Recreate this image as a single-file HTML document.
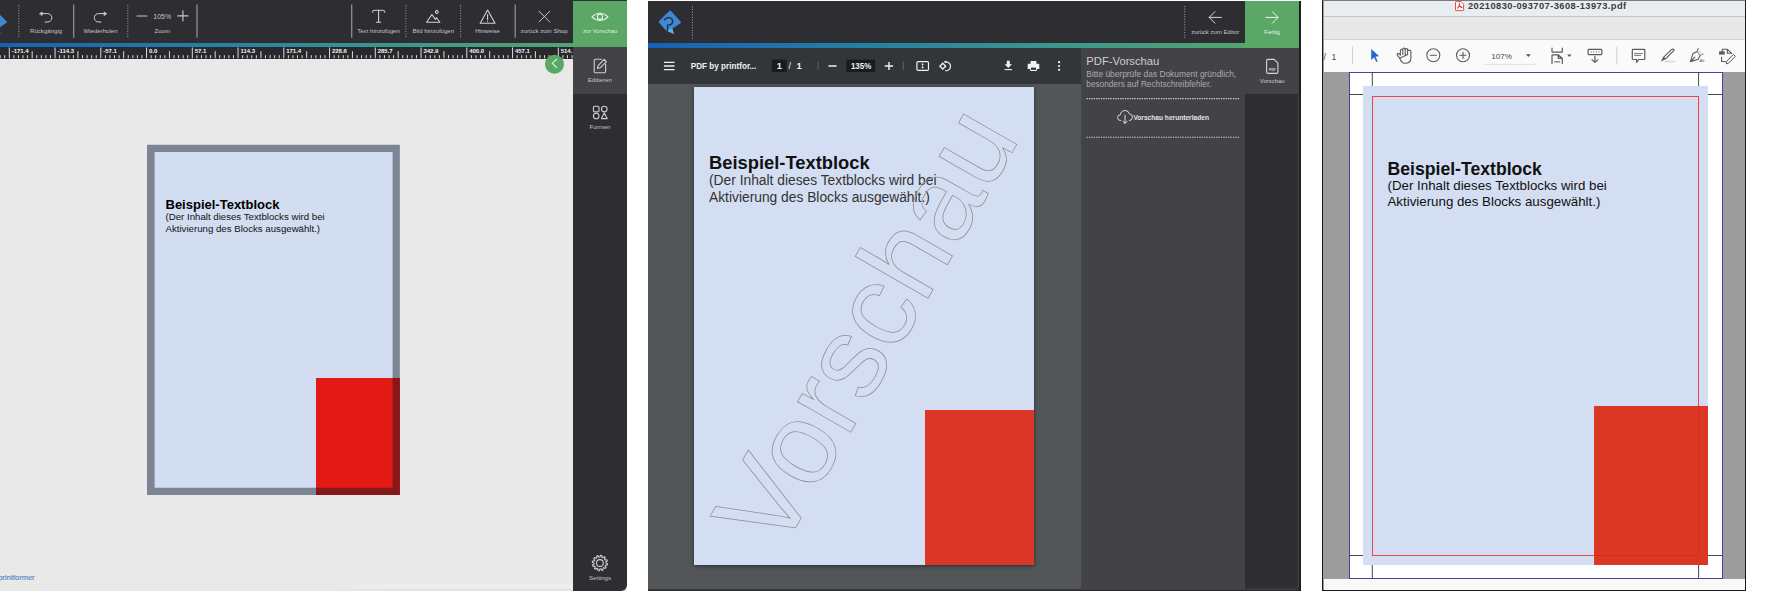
<!DOCTYPE html>
<html><head><meta charset="utf-8">
<style>
*{margin:0;padding:0;box-sizing:border-box}
html,body{width:1772px;height:591px;overflow:hidden;background:#fff;font-family:"Liberation Sans",sans-serif}
.a{position:absolute}
.lbl{position:absolute;color:#c9c9cc;font-size:5.6px;white-space:nowrap;text-align:center;transform:translateX(-50%)}
.sepd{position:absolute;width:0;border-left:1px dotted #9a9a9e}
.seps{position:absolute;width:1.3px;background:#8d8d91}
svg{position:absolute;overflow:visible}
</style></head><body>

<!-- ================= PANEL 1 ================= -->
<div class="a" style="left:0;top:0;width:627px;height:591px;background:#e9e9e9"></div>
<div class="a" style="left:0;top:0;width:627px;height:42.5px;background:#2e2d32"></div>
<div class="a" style="left:0;top:42.5px;width:627px;height:4.8px;background:linear-gradient(90deg,#1562b7 0%,#2480a4 33%,#3a978d 62%,#59a867 100%)"></div>
<div class="a" style="left:0;top:47.3px;width:573px;height:11.3px;background:#29292d"></div>
<!-- sidebar -->
<div class="a" style="left:573px;top:47.3px;width:54px;height:544px;background:#2e2d32;border-bottom-right-radius:6px"></div>
<div class="a" style="left:573px;top:47.3px;width:54px;height:46.5px;background:#434247"></div>
<div class="a" style="left:573px;top:1px;width:54px;height:46.3px;background:#5ba866"></div>


<!-- p1 toolbar svg -->
<svg class="a" style="left:0;top:0" width="627" height="591" viewBox="0 0 627 591">
<g clip-path="url(#c1)">
<clipPath id="c1"><rect x="0" y="0" width="573" height="591"/></clipPath>
<!-- logo -->
<path d="M-4.2,10.6 L7.4,22.3 L-1.5,28.2 L0.5,33.6 L-6,30.8 L-15.8,21.5 Z" fill="#3d89d4"/>
<path d="M0.5,33.6 L-1.5,28.2 L-5,30 Z" fill="#5bb0ea"/>
</g>
<!-- separators -->
<path d="M18.8,5V38M127.8,5V38M405.9,5V38M460.6,5V38" stroke="#a6a6aa" stroke-width="1" stroke-dasharray="1,1.6"/>
<path d="M73.7,4.6V37.8M197,4.6V37.8M351.7,4.6V37.8M515.2,4.6V37.8" stroke="#8e8e92" stroke-width="1.3"/>
<g fill="none" stroke="#d2d2d5" stroke-width="1.1" stroke-linecap="round" stroke-linejoin="round">
<!-- undo -->
<path d="M41.8,13.6 H47.6 A4.2,4.2 0 0 1 47.6,22 H45.2" stroke-width="1"/>
<path d="M39.6,13.6 L42.2,11.9 L42.2,15.3 Z" fill="#d2d2d5" stroke-width="0.6"/>
<!-- redo -->
<path d="M104.3,13.6 H98.5 A4.2,4.2 0 0 0 98.5,22 H100.9" stroke-width="1"/>
<path d="M106.6,13.6 L104,11.9 L104,15.3 Z" fill="#d2d2d5" stroke-width="0.6"/>
<!-- minus plus -->
<path d="M137,16H147" stroke-width="1.15" stroke="#c8c8cc"/>
<path d="M177.8,15.9H188M182.9,10.8V21" stroke-width="1.15" stroke="#c8c8cc"/>
<!-- T -->
<path d="M372.5,12.2 Q372.8,10.3 375,10.3 H382.3 Q384.6,10.3 384.8,12.2 M378.6,10.3 V21.8 M376.4,22.2 H380.8"/>
<!-- mountain -->
<path d="M426.6,22.3 L431.9,14.5 L435.4,19.4 L436.6,17.7 L439.8,22.3 Z"/>
<circle cx="436.8" cy="12" r="1.4"/>
<!-- warning -->
<path d="M487.6,10 L495,23.3 H480.2 Z"/>
<path d="M487.6,14.6V19.6M487.6,21.2V21.4"/>
<!-- X -->
<path d="M539,11.2 L549.8,22 M549.8,11.2 L539,22" stroke-width="0.9"/>
<!-- eye -->
<path d="M591.9,16.8 Q600,9.6 608,16.8 Q600,24 591.9,16.8 Z" stroke="#e6f2e6"/>
<circle cx="600" cy="16.8" r="2.6" stroke="#e6f2e6"/>
</g>
<g font-family="Liberation Sans" font-size="6.1" fill="#c4c4c8" text-anchor="middle">
<text x="46.1" y="33.2">Rückgängig</text>
<text x="100.5" y="33.2">Wiederholen</text>
<text x="162.2" y="33.2">Zoom</text>
<text x="378.5" y="33.2">Text hinzufügen</text>
<text x="433.3" y="33.2">Bild hinzufügen</text>
<text x="487.6" y="33.2">Hinweise</text>
<text x="544.1" y="33.2">zurück zum Shop</text>
<text x="600.1" y="33.2" fill="#dbeedd" font-size="5.9">zur Vorschau</text>
<text x="162.2" y="18.8" font-size="7.9" fill="#c4c4c8" textLength="17.9" lengthAdjust="spacingAndGlyphs">105%</text>
</g>
<!-- ruler -->
<g clip-path="url(#c2)" font-family="Liberation Sans" font-size="6" font-weight="bold" fill="#f4f4f4">
<clipPath id="c2"><rect x="0" y="47.3" width="573" height="11.3"/></clipPath>
<path d="M0.15,55.2V58.6M4.73,55.2V58.6M9.30,47.3V58.6M13.88,55.2V58.6M18.45,55.2V58.6M23.03,55.2V58.6M27.60,55.2V58.6M32.17,51.2V58.6M36.75,55.2V58.6M41.33,55.2V58.6M45.90,55.2V58.6M50.48,55.2V58.6M55.05,47.3V58.6M59.62,55.2V58.6M64.20,55.2V58.6M68.78,55.2V58.6M73.35,55.2V58.6M77.92,51.2V58.6M82.50,55.2V58.6M87.08,55.2V58.6M91.65,55.2V58.6M96.22,55.2V58.6M100.80,47.3V58.6M105.38,55.2V58.6M109.95,55.2V58.6M114.53,55.2V58.6M119.10,55.2V58.6M123.67,51.2V58.6M128.25,55.2V58.6M132.83,55.2V58.6M137.40,55.2V58.6M141.98,55.2V58.6M146.55,47.3V58.6M151.13,55.2V58.6M155.70,55.2V58.6M160.28,55.2V58.6M164.85,55.2V58.6M169.43,51.2V58.6M174.00,55.2V58.6M178.58,55.2V58.6M183.15,55.2V58.6M187.73,55.2V58.6M192.30,47.3V58.6M196.88,55.2V58.6M201.45,55.2V58.6M206.03,55.2V58.6M210.60,55.2V58.6M215.18,51.2V58.6M219.75,55.2V58.6M224.33,55.2V58.6M228.90,55.2V58.6M233.48,55.2V58.6M238.05,47.3V58.6M242.63,55.2V58.6M247.20,55.2V58.6M251.78,55.2V58.6M256.35,55.2V58.6M260.93,51.2V58.6M265.50,55.2V58.6M270.08,55.2V58.6M274.65,55.2V58.6M279.23,55.2V58.6M283.80,47.3V58.6M288.38,55.2V58.6M292.95,55.2V58.6M297.53,55.2V58.6M302.10,55.2V58.6M306.68,51.2V58.6M311.25,55.2V58.6M315.83,55.2V58.6M320.40,55.2V58.6M324.98,55.2V58.6M329.55,47.3V58.6M334.12,55.2V58.6M338.70,55.2V58.6M343.28,55.2V58.6M347.85,55.2V58.6M352.43,51.2V58.6M357.00,55.2V58.6M361.58,55.2V58.6M366.15,55.2V58.6M370.73,55.2V58.6M375.30,47.3V58.6M379.88,55.2V58.6M384.45,55.2V58.6M389.03,55.2V58.6M393.60,55.2V58.6M398.18,51.2V58.6M402.75,55.2V58.6M407.33,55.2V58.6M411.90,55.2V58.6M416.48,55.2V58.6M421.05,47.3V58.6M425.62,55.2V58.6M430.20,55.2V58.6M434.78,55.2V58.6M439.35,55.2V58.6M443.93,51.2V58.6M448.50,55.2V58.6M453.08,55.2V58.6M457.65,55.2V58.6M462.23,55.2V58.6M466.80,47.3V58.6M471.38,55.2V58.6M475.95,55.2V58.6M480.53,55.2V58.6M485.10,55.2V58.6M489.68,51.2V58.6M494.25,55.2V58.6M498.83,55.2V58.6M503.40,55.2V58.6M507.98,55.2V58.6M512.55,47.3V58.6M517.12,55.2V58.6M521.70,55.2V58.6M526.27,55.2V58.6M530.85,55.2V58.6M535.42,51.2V58.6M540.00,55.2V58.6M544.57,55.2V58.6M549.15,55.2V58.6M553.73,55.2V58.6M558.30,47.3V58.6M562.88,55.2V58.6M567.45,55.2V58.6M572.02,55.2V58.6" stroke="#dcdcdc" stroke-width="1"/>
<text x="11.70" y="53.4">-171.4</text>
<text x="57.45" y="53.4">-114.3</text>
<text x="103.20" y="53.4">-57.1</text>
<text x="148.95" y="53.4">0.0</text>
<text x="194.70" y="53.4">57.1</text>
<text x="240.45" y="53.4">114.3</text>
<text x="286.20" y="53.4">171.4</text>
<text x="331.95" y="53.4">228.6</text>
<text x="377.70" y="53.4">285.7</text>
<text x="423.45" y="53.4">342.9</text>
<text x="469.20" y="53.4">400.0</text>
<text x="514.95" y="53.4">457.1</text>
<text x="560.70" y="53.4">514.</text>

</g>
</svg>


<!-- p1 sidebar + canvas extras -->
<svg class="a" style="left:0;top:0" width="627" height="591" viewBox="0 0 627 591">
<circle cx="554.5" cy="64.3" r="9.5" fill="#5ba866"/>
<path d="M556.6,59.3 L552.3,63.4 L556.6,67.5" fill="none" stroke="#d9eedb" stroke-width="1.25" stroke-linecap="round" stroke-linejoin="round"/>
<g fill="none" stroke="#cfcfd2" stroke-width="1.1" stroke-linecap="round" stroke-linejoin="round">
<!-- edit -->
<path d="M601.5,59.2 H595.3 Q594.2,59.2 594.2,60.3 V71.6 Q594.2,72.7 595.3,72.7 H604.5 Q605.6,72.7 605.6,71.6 V64"/>
<path d="M597.5,68.4 L598.1,65.6 L604.2,59.4 L606.4,61.6 L600.3,67.8 Z"/>
<!-- formen -->
<rect x="593.4" y="106.3" width="5.6" height="5.6" rx="1.2"/>
<circle cx="604.3" cy="109.1" r="2.8"/>
<circle cx="596.2" cy="116" r="2.8"/>
<path d="M604.3,113.1 L607.2,118.6 H601.4 Z"/>
<!-- gear -->
<circle cx="599.9" cy="563" r="3.4"/>
</g>
<path d="M605.90,563.00 L607.57,563.72 L607.34,564.99 L605.52,565.09 L605.10,566.00 L606.18,567.46 L605.34,568.44 L603.72,567.62 L602.90,568.20 L603.11,570.00 L601.89,570.44 L600.90,568.92 L599.90,569.00 L599.18,570.67 L597.91,570.44 L597.81,568.62 L596.90,568.20 L595.44,569.28 L594.46,568.44 L595.28,566.82 L594.70,566.00 L592.90,566.21 L592.46,564.99 L593.98,564.00 L593.90,563.00 L592.23,562.28 L592.46,561.01 L594.28,560.91 L594.70,560.00 L593.62,558.54 L594.46,557.56 L596.08,558.38 L596.90,557.80 L596.69,556.00 L597.91,555.56 L598.90,557.08 L599.90,557.00 L600.62,555.33 L601.89,555.56 L601.99,557.38 L602.90,557.80 L604.36,556.72 L605.34,557.56 L604.52,559.18 L605.10,560.00 L606.90,559.79 L607.34,561.01 L605.82,562.00Z" fill="none" stroke="#cfcfd2" stroke-width="1.1" stroke-linejoin="round"/>
<g font-family="Liberation Sans" font-size="6.1" fill="#c4c4c8" text-anchor="middle">
<text x="599.8" y="82.3">Editieren</text>
<text x="600" y="128.7">Formen</text>
<text x="600" y="580.1">Settings</text>
</g>
<text x="-1.6" y="579.6" font-family="Liberation Sans" font-size="7.6" fill="#4f83c6" stroke="#4f83c6" stroke-width="0.15" textLength="36.2" lengthAdjust="spacingAndGlyphs">printformer</text>
</svg>

<div class="a" style="left:330px;top:583px;width:243px;height:8px;background:linear-gradient(180deg,rgba(255,255,255,0) 0%,rgba(255,255,255,0.35) 45%,rgba(0,0,0,0.04) 100%);-webkit-mask-image:linear-gradient(90deg,transparent 0,#000 60px)"></div>
<!-- page 1 -->
<div class="a" style="left:147px;top:144.8px;width:252.8px;height:350.2px;background:#d3ddf1"></div>
<div class="a" style="left:316.1px;top:378px;width:83.7px;height:117px;background:#e41915"></div>
<svg class="a" style="left:0;top:0" width="627" height="591"><path fill-rule="evenodd" fill="rgba(20,25,35,0.45)" d="M147,144.8H399.8V495H147Z M154.6,151.9V487.8H392.6V151.9Z"/></svg>
<div class="a" style="left:165.5px;top:198.1px;font-size:13px;line-height:13px;font-weight:bold;color:#000;white-space:nowrap">Beispiel-Textblock</div>
<div class="a" style="left:165.5px;top:211.45px;font-size:9.66px;line-height:11.4px;color:#111;white-space:nowrap">(Der Inhalt dieses Textblocks wird bei<br>Aktivierung des Blocks ausgewählt.)</div>

<!-- ================= PANEL 2 ================= -->
<div class="a" style="left:648px;top:1px;width:652px;height:590px;background:#2e2d32"></div>
<div class="a" style="left:648px;top:43px;width:651px;height:5px;background:linear-gradient(90deg,#1562b7 0%,#2480a4 33%,#3a978d 62%,#59a867 100%)"></div>
<div class="a" style="left:648px;top:48px;width:433px;height:36px;background:#323639"></div>
<div class="a" style="left:648px;top:84px;width:433px;height:505px;background:#525659"></div>
<div class="a" style="left:1081px;top:48px;width:164px;height:541px;background:#434247"></div>
<div class="a" style="left:1245px;top:48px;width:54px;height:46px;background:#434247"></div>
<div class="a" style="left:1245px;top:1px;width:54px;height:47px;background:#5ba866"></div>
<div class="a" style="left:1299px;top:1px;width:2px;height:590px;background:#1e1e22"></div>

<!-- page 2 -->
<div class="a" style="left:694px;top:86.6px;width:340px;height:478.4px;background:#d3def2;box-shadow:0 1px 4px rgba(0,0,0,0.5)"></div>
<div class="a" style="left:924.5px;top:410px;width:109.5px;height:155px;background:#dc3628"></div>
<div class="a" style="left:709px;top:153.5px;font-size:18.35px;line-height:18.35px;font-weight:bold;color:#111;white-space:nowrap">Beispiel-Textblock</div>
<div class="a" style="left:709px;top:173.1px;font-size:13.8px;line-height:16.8px;color:#333;white-space:nowrap">(Der Inhalt dieses Textblocks wird bei<br>Aktivierung des Blocks ausgewählt.)</div>


<!-- p2 svg -->
<svg class="a" style="left:0;top:0" width="1772" height="591" viewBox="0 0 1772 591">
<clipPath id="pg2"><rect x="694" y="86.6" width="340" height="478.4"/></clipPath>
<g clip-path="url(#pg2)">
<text transform="translate(779,556.6) rotate(-60)" font-family="Liberation Sans" font-size="116" fill="none" stroke="#8f8f92" stroke-width="0.75">Vorschau</text>
</g>
<!-- logo -->
<path d="M669.5,10.8 Q670.3,10.3 671,11 L680.6,21.6 Q681.6,22.9 680.2,23.6 L672.3,28.6 L674,33.9 L667.6,31.2 Q666.4,30.8 665.6,30 L659.2,22.8 Q658.3,21.7 659.3,20.8 Z" fill="#3d89d4"/>
<path d="M667.6,31.2 L674,33.9 L672.3,28.6 L668.2,29.4 Z" fill="#5fb3ec"/>
<path d="M664.4,19.9 Q666.5,17.1 669.5,17.6 Q673,18.4 672.6,21.8 Q672,25 668.3,25 L667.6,25.3 V30.8" fill="none" stroke="#2b2b30" stroke-width="1.45" stroke-linecap="round" stroke-linejoin="round"/>
<!-- seps -->
<path d="M692.5,6.5V39M1184.7,6V38" stroke="#a6a6aa" stroke-width="1" stroke-dasharray="1,1.6"/>
<g fill="none" stroke="#d6d6d9" stroke-width="1" stroke-linecap="round" stroke-linejoin="round">
<path d="M1209.2,17.4H1221.3M1215,11.6L1209.2,17.4L1215,23.2"/>
<path d="M1266,17.4H1278.1M1272.3,11.6L1278.1,17.4L1272.3,23.2" stroke="#eef6ee"/>
<!-- pdf file icon -->
<path d="M1268,59.4 H1274.2 L1277.9,63.1 V72 Q1277.9,73.4 1276.5,73.4 H1268 Q1266.6,73.4 1266.6,72 V60.8 Q1266.6,59.4 1268,59.4 Z" stroke-width="1.1"/>
<!-- cloud -->
<path d="M1120.5,120.6 Q1117.5,120.4 1117.5,117.6 Q1117.6,114.9 1120.4,114.8 Q1121,110.6 1125.1,110.5 Q1128.7,110.6 1129.5,114 Q1132.5,114.2 1132.5,117.3 Q1132.4,120.5 1129.4,120.6" stroke="#dedede"/>
<path d="M1125,115.2V123.4M1122.8,121.2L1125,123.4L1127.2,121.2" stroke="#dedede"/>
</g>
<text x="1272.3" y="70.6" font-family="Liberation Sans" font-weight="bold" font-size="3.4" fill="#d6d6d9" text-anchor="middle">PDF</text>
<!-- pdf toolbar -->
<path d="M663.9,62.3H674.5M663.9,66H674.5M663.9,69.7H674.5" stroke="#f1f1f1" stroke-width="1.3"/>
<rect x="771.9" y="59.6" width="14.8" height="12.4" fill="#191b1c"/>
<rect x="846.3" y="59.6" width="28.8" height="12.4" fill="#191b1c"/>
<path d="M818.1,61.6V70.2M903.3,61.6V70.2" stroke="#5f6368" stroke-width="1"/>
<path d="M828.4,66H836.6M884.8,66H893.1M889,61.9V70.1" stroke="#f1f1f1" stroke-width="1.4"/>
<g fill="none" stroke="#f1f1f1" stroke-width="1.2">
<rect x="916.9" y="61.6" width="11.6" height="8.8" rx="1.2"/>
<path d="M1004.6,69.6H1012" stroke-width="1.1"/>
</g>
<path d="M921.3,64.7 L922.6,63.1 L923.9,64.7Z M921.3,67.1 L922.6,68.7 L923.9,67.1Z" fill="#f1f1f1"/>
<path d="M922.6,64.5V67.3" stroke="#f1f1f1" stroke-width="0.7"/>
<path d="M939.9,66.2 L942.8,63.3 L945.7,66.2 L942.8,69.1Z" fill="none" stroke="#f1f1f1" stroke-width="1.35"/>
<path d="M945.9,61.95 A4.4,4.4 0 1 1 945.2,70.65" fill="none" stroke="#f1f1f1" stroke-width="1.2"/>
<circle cx="945.4" cy="61.9" r="1.15" fill="#f1f1f1"/>
<path d="M1006.8,60.7H1009.8V64.3H1012L1008.3,68L1004.6,64.3H1006.8Z" fill="#f1f1f1"/>
<path d="M1030.6,61 H1036.4 V63.8 H1030.6Z M1028.2,63.8 H1038.8 Q1039.3,63.8 1039.3,64.4 V69 H1036.8 V71 H1030.2 V69 H1027.7 V64.4 Q1027.7,63.8 1028.2,63.8Z" fill="#f1f1f1"/>
<rect x="1031" y="67.6" width="5" height="2.3" fill="#323639"/>
<circle cx="1059.1" cy="62.2" r="1.1" fill="#f1f1f1"/><circle cx="1059.1" cy="66" r="1.1" fill="#f1f1f1"/><circle cx="1059.1" cy="69.8" r="1.1" fill="#f1f1f1"/>
<g font-family="Liberation Sans" font-weight="bold" fill="#f1f1f1">
<text x="690.8" y="69" font-size="9" textLength="65.6" lengthAdjust="spacingAndGlyphs">PDF by printfor...</text>
<text x="779.3" y="68.6" font-size="9.3" text-anchor="middle">1</text>
<text x="788.4" y="68.6" font-size="9" font-weight="normal">/</text>
<text x="796.6" y="68.6" font-size="9.3">1</text>
<text x="850.9" y="68.7" font-size="9.2" textLength="20.3" lengthAdjust="spacingAndGlyphs">135%</text>
</g>
<!-- side panel -->
<g font-family="Liberation Sans" fill="#cfcfd2">
<text x="1086.3" y="65.3" font-size="11.24" fill="#cdcdd0">PDF-Vorschau</text>
<text x="1086.3" y="77.1" font-size="8.4" fill="#ababaf">Bitte überprüfe das Dokument gründlich,</text>
<text x="1086.3" y="87.3" font-size="8.25" fill="#ababaf">besonders auf Rechtschreibfehler.</text>
<text x="1133.4" y="119.8" font-size="6.62" font-weight="bold" fill="#e4e4e6">Vorschau herunterladen</text>
<text x="1215.2" y="33.8" font-size="6.02" text-anchor="middle" fill="#c8c8cc">zurück zum Editor</text>
<text x="1272" y="33.8" font-size="6.14" text-anchor="middle" fill="#e6f2e6">Fertig</text>
<text x="1272.2" y="82.9" font-size="5.95" text-anchor="middle" fill="#c8c8cc">Vorschau</text>
</g>
<path d="M1086.5,98.6H1239M1086.5,137.2H1239" stroke="#d4d4d7" stroke-width="1.1" stroke-dasharray="1.3,1.1"/>
<path d="M1298.6,94V585 Q1298.6,589 1294.6,589 H648" fill="none" stroke="#4a4a4e" stroke-width="0.9"/>
</svg>

<!-- ================= PANEL 3 ================= -->
<div class="a" style="left:1322px;top:0;width:424px;height:591px;background:#9c9c9c;border:1.5px solid #1a1a1a;border-top:1px solid #7a7a7a"></div>
<div class="a" style="left:1323.5px;top:1px;width:421px;height:15.5px;background:#e9ecf1;border-bottom:1px solid #c5c5c8"></div>
<div class="a" style="left:1323.5px;top:16.5px;width:421px;height:23px;background:#e8e8e8;border-bottom:1px solid #d4d4d4"></div>
<div class="a" style="left:1323.5px;top:39.5px;width:421px;height:32px;background:#fafafa"></div>
<div class="a" style="left:1323.5px;top:578.5px;width:421px;height:11px;background:#f8f8f8"></div>
<!-- page 3 -->
<div class="a" style="left:1348.5px;top:71.8px;width:374px;height:507px;background:#fff;border:1.3px solid #4a3fa0"></div>
<div class="a" style="left:1363px;top:86px;width:345px;height:479px;background:#d3def2"></div>
<div class="a" style="left:1372px;top:95.5px;width:327px;height:460px;border:1px solid #e8444a"></div>
<div class="a" style="left:1593.5px;top:405.5px;width:114.5px;height:159.5px;background:rgba(218,40,20,0.92)"></div>
<div class="a" style="left:1387.5px;top:161.4px;font-size:17.64px;line-height:17.64px;font-weight:bold;color:#111;white-space:nowrap">Beispiel-Textblock</div>
<div class="a" style="left:1387.5px;top:178.2px;font-size:13.3px;line-height:16.2px;color:#111;white-space:nowrap">(Der Inhalt dieses Textblocks wird bei<br>Aktivierung des Blocks ausgewählt.)</div>


<!-- p3 svg -->
<svg class="a" style="left:0;top:0" width="1772" height="591" viewBox="0 0 1772 591">
<!-- title -->
<path d="M1456.3,1.6 H1461 L1463.6,4.2 V9.8 Q1463.6,10.6 1462.8,10.6 H1456.3 Q1455.5,10.6 1455.5,9.8 V2.4 Q1455.5,1.6 1456.3,1.6 Z" fill="#fff" stroke="#e0402f" stroke-width="0.9"/>
<path d="M1459.4,3.4 Q1459.9,5.8 1457.6,8.2 M1459.3,5.6 Q1460.4,7.2 1462,7.4" fill="none" stroke="#e3281c" stroke-width="1.1" stroke-linecap="round"/>
<text x="1468" y="9.1" font-family="Liberation Sans" font-weight="bold" font-size="9.3" fill="#3b3b3b" textLength="158.2" lengthAdjust="spacing">20210830-093707-3608-13973.pdf</text>
<!-- toolbar -->
<g font-family="Liberation Sans" fill="#4a4a4a" font-size="8.1">
<text x="1323.4" y="59.8" font-size="8.6">/</text>
<text x="1331.4" y="59.8" font-size="8.6">1</text>
<text x="1491.2" y="59.1" textLength="20.8" lengthAdjust="spacingAndGlyphs">107%</text>
</g>
<path d="M1352.5,46.4V64.5M1616.8,46.4V64.6" stroke="#d0d0d0" stroke-width="1"/>
<path d="M1484.6,64.4H1535.6" stroke="#d8d8d8" stroke-width="0.8"/>
<path d="M1525.9,54.3H1530.8L1528.35,57.1Z M1567.1,54.6H1571.5L1569.3,56.9Z" fill="#555"/>
<path d="M1371.2,49 L1379.2,56.3 L1375.6,56.6 L1377.6,61.2 L1376.2,62 L1374.2,57.4 L1371.2,59.9 Z" fill="#2a6ac5"/>
<g fill="none" stroke="#5a5a5a" stroke-width="1.1" stroke-linecap="round" stroke-linejoin="round">
<!-- hand -->
<path d="M1399.7,58.2 L1397.7,55.6 Q1396.6,54.3 1397.6,53.6 Q1398.5,53 1399.5,54.2 L1400.4,55.2 V50.2 Q1400.4,49.2 1401.6,49.2 Q1402.8,49.2 1402.8,50.2 V54.6 M1402.8,54.6 V49.2 Q1402.8,48.1 1404,48.1 Q1405.2,48.1 1405.2,49.2 V54.6 M1405.2,54.6 V49.6 Q1405.2,48.6 1406.4,48.6 Q1407.6,48.6 1407.6,49.6 V54.6 M1407.6,54.6 V51 Q1407.6,50.1 1408.8,50.1 Q1410.9,50.1 1410.9,51.2 V58 Q1410.9,63.3 1404.9,63.3 Q1401.6,63.3 1399.7,58.2 Z"/>
<circle cx="1433.3" cy="55.2" r="6.5"/>
<path d="M1430.2,55.3H1436.4"/>
<circle cx="1463" cy="55.2" r="6.5"/>
<path d="M1459.9,55.3H1466.1M1463,52.2V58.4"/>
<!-- fit -->
<path d="M1552,48.1 V51.5 Q1552,52.2 1552.7,52.2 H1561.6 Q1562.3,52.2 1562.3,51.5 V48.1" stroke-width="1.2"/>
<path d="M1552,63.5 V55.5 Q1552,54.8 1552.7,54.8 H1558.2 L1562.3,58.5 V63.5 M1558.2,55 V58.3 H1562" stroke-width="1.2"/>
<path d="M1554.5,61.9 H1559.8" stroke-width="1"/>
<!-- scroll -->
<rect x="1588.1" y="49.4" width="13.7" height="5.2" rx="0.8" stroke-width="1.2"/>
<path d="M1594.9,56.3V62.2 M1592,59.6 L1594.9,62.4 L1597.9,59.6" stroke-width="1.2"/>
<!-- comment -->
<path d="M1633.1,49.4 H1644 Q1644.8,49.4 1644.8,50.2 V58.7 Q1644.8,59.5 1644,59.5 H1638.9 L1636.6,62.4 V59.5 H1633.1 Q1632.3,59.5 1632.3,58.7 V50.2 Q1632.3,49.4 1633.1,49.4 Z" stroke-width="1.2"/>
<path d="M1634.6,53.6H1642.5M1634.6,55.4H1640.8" stroke-width="0.8"/>
<!-- highlighter -->
<path d="M1663.2,57.6 L1671.4,49.6 Q1673.2,48.4 1674.2,50.2 L1665.6,58.8 Z" stroke-width="1.1"/>
<!-- pen -->
<path d="M1698.2,48.6 L1697.2,51.4 L1693,53.4 L1690.5,61.6 L1698.2,59.2 L1700.4,55.1 L1703,54 M1697.2,51.4 L1700.4,55.1 M1690.8,61.3 L1694.8,57.2" stroke-width="1.1"/>
<text x="1699.6" y="61.6" font-family="Liberation Sans" font-size="4" fill="#5a5a5a" stroke="none" font-style="italic">Ab</text>
<!-- edit export -->
<path d="M1722.2,51 V49.3 H1727.3 L1731.8,53.4 M1727.3,49.5 V53.2 H1731.6 M1721.6,57.4 V61.5 H1725.4" stroke-width="1.1"/>
<path d="M1733.6,54.6 L1735.4,56.4 L1728.2,63.4 L1726.2,63.8 L1726.6,61.8 Z" stroke-width="1"/>
</g>
<rect x="1719.1" y="51.3" width="5.6" height="3.3" fill="#5a5a5a"/>
<path d="M1663.2,57.6 L1665.6,58.8 L1664.6,59.8 L1662.4,58.6 Z M1662.4,58.6 L1660.8,61.6 L1664.6,59.8 Z" fill="#5a5a5a"/>
<path d="M1590.9,51.9H1591.9M1593.3,51.9H1594.3M1595.9,51.9H1596.9M1598.4,51.9H1599.4" stroke="#777" stroke-width="1.3"/>
<path d="M1698.6,49.2 L1703.4,53.6 L1700.6,55.2 L1697.4,51.8 Z" fill="#e3e3e3"/>
<path d="M1664.6,61.5H1675.2" stroke="#dadada" stroke-width="1.6"/>
<!-- trim marks -->
<path d="M1372.3,72.5V86M1349.5,94.5H1363M1698.6,72.5V86M1708,94.5H1722M1349.5,555.5H1363M1372.3,565V578M1708,555.5H1722M1698.6,565V578" stroke="#333" stroke-width="0.9"/>
</svg>

</body></html>
